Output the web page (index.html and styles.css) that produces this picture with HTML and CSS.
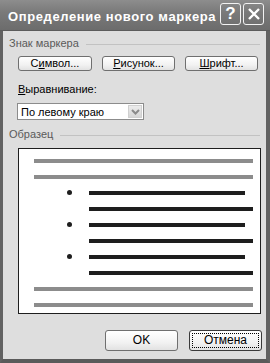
FILE: index.html
```html
<!DOCTYPE html>
<html lang="ru">
<head>
    <meta charset="UTF-8" />
    <title>Определение нового маркера</title>
    <link rel="stylesheet" href="styles.css">
</head>
<body>
    <div class="window">
        <div class="titlebar">
            <span class="title">Определение нового маркера</span>
            <div class="tb-buttons">
                <span class="tb-btn tb-help">?</span>
                <span class="tb-btn">
                    <svg width="14" height="14" viewBox="0 0 14 14">
                        <path d="M2 2 L12 12 M12 2 L2 12" stroke="#fff" stroke-width="2.4" fill="none" />
                    </svg>
                </span>
            </div>
        </div>

        <div class="content">
            <div class="group-label"><span>Знак маркера</span></div>
            <div class="btn-row">
                <button class="btn">С<u>и</u>мвол...</button>
                <button class="btn"><u>Р</u>исунок...</button>
                <button class="btn"><u>Ш</u>рифт...</button>
            </div>

            <div class="field-label"><u>В</u>ыравнивание:</div>
            <div class="select">
                <span class="select-text">По левому краю</span>
                <span class="select-arrow">
                    <svg width="9" height="6" viewBox="0 0 9 6">
                        <path d="M1 1 L4.5 4.5 L8 1" stroke="#8a8a8a" stroke-width="2" fill="none" />
                    </svg>
                </span>
            </div>

            <div class="group-label sample-label"><span>Образец</span></div>
            <div class="preview">
                <div class="line grey"></div>
                <div class="line grey"></div>
                <div class="item"><span class="dot"></span><div class="line black short"></div></div>
                <div class="item"><div class="line black"></div></div>
                <div class="item"><span class="dot"></span><div class="line black short"></div></div>
                <div class="item"><div class="line black"></div></div>
                <div class="item"><span class="dot"></span><div class="line black short"></div></div>
                <div class="item"><div class="line black"></div></div>
                <div class="line grey"></div>
                <div class="line grey"></div>
            </div>

            <div class="footer">
                <button class="btn btn-big">OK</button>
                <button class="btn btn-big focused">Отмена</button>
            </div>
        </div>
    </div>
</body>
</html>
```

FILE: styles.css
```css
body {
    margin: 0;
    background-color: #dedede;
    font-family: "Liberation Sans", Arial, sans-serif;
    font-size: 11px;
}

.window {
    box-sizing: border-box;
    width: 270px;
    height: 363px;
    border-left: 3px solid #626262;
    border-right: 4px solid #626262;
    border-bottom: 4px solid #5a5a5a;
    background-color: #dedede;
    display: flex;
    flex-direction: column;
}

.titlebar {
    height: 31px;
    margin-left: -3px;
    margin-right: -4px;
    background: linear-gradient(#8d8d8d, #7a7a7a 40%, #6c6c6c);
    display: flex;
    align-items: center;
    justify-content: space-between;
    padding: 0 6px 0 8px;
    box-sizing: border-box;
    border-bottom: 1px solid #5c5c5c;
}

.title {
    color: #fff;
    font-weight: bold;
    font-size: 13px;
    letter-spacing: 0.6px;
    margin-top: 2px;
}

.tb-buttons {
    display: flex;
    gap: 2px;
    margin-top: -3px;
}

.tb-btn {
    box-sizing: border-box;
    width: 21px;
    height: 22px;
    border: 1px solid #f2f2f2;
    border-radius: 3px;
    display: flex;
    align-items: center;
    justify-content: center;
    color: #fff;
}

.tb-help {
    font-size: 17px;
    font-weight: bold;
}

.content {
    flex: 1;
    display: flex;
    flex-direction: column;
    color: #000;
}

.group-label {
    display: flex;
    align-items: center;
    line-height: 13px;
    margin: 6px 6px 0 6px;
    color: #5a5a5a;
}

.group-label::after {
    content: "";
    flex: 1;
    height: 1px;
    margin-left: 7px;
    margin-top: 1px;
    background-color: #c2c2c2;
}

.sample-label {
    margin-top: 8px;
}

.btn-row {
    display: flex;
    margin: 6px 0 0 15px;
    gap: 10px;
}

.btn {
    box-sizing: border-box;
    width: 74px;
    height: 15px;
    padding: 0;
    border: 1px solid #6f6f6f;
    border-radius: 3px;
    background: linear-gradient(#ffffff, #f2f2f2 60%, #e2e2e2);
    font-family: "Liberation Sans", Arial, sans-serif;
    font-size: 11px;
    color: #000;
    line-height: 13px;
}

.btn-row .btn + .btn {
    width: 73px;
}

.field-label {
    margin: 12px 0 0 15px;
    line-height: 13px;
}

.select {
    box-sizing: border-box;
    width: 127px;
    height: 17px;
    margin: 7px 0 0 14px;
    border: 1px solid #8c8c8c;
    background-color: #fff;
    display: flex;
    align-items: center;
    justify-content: space-between;
    padding: 0 1px 0 3px;
}

.select-arrow {
    box-sizing: border-box;
    width: 14px;
    height: 13px;
    background: linear-gradient(#ececec, #d6d6d6);
    border: 1px solid #d0d0d0;
    display: flex;
    align-items: center;
    justify-content: center;
}

.preview {
    box-sizing: border-box;
    width: 243px;
    height: 166px;
    margin: 7px 0 0 15px;
    border: 1px solid #1e1e1e;
    background-color: #fff;
    padding: 10px 7px 0 15px;
    display: flex;
    flex-direction: column;
    gap: 12px;
}

.line {
    height: 4px;
    flex-shrink: 0;
}

.grey {
    background-color: #8c8c8c;
}

.black {
    background-color: #1e1e1e;
    flex: 1;
}

.short {
    margin-right: 8px;
}

.item {
    display: flex;
    align-items: center;
    height: 4px;
    padding-left: 55px;
    position: relative;
}

.dot {
    position: absolute;
    left: 33px;
    top: -1px;
    width: 5px;
    height: 5px;
    border-radius: 50%;
    background-color: #1e1e1e;
}

.footer {
    display: flex;
    justify-content: flex-end;
    gap: 11px;
    margin: 16px 4px 0 0;
}

.btn-big {
    width: 73px;
    height: 21px;
    font-size: 12px;
}

.focused {
    border-color: #3a3a3a;
    outline: 1px dotted #000;
    outline-offset: -4px;
}
```
